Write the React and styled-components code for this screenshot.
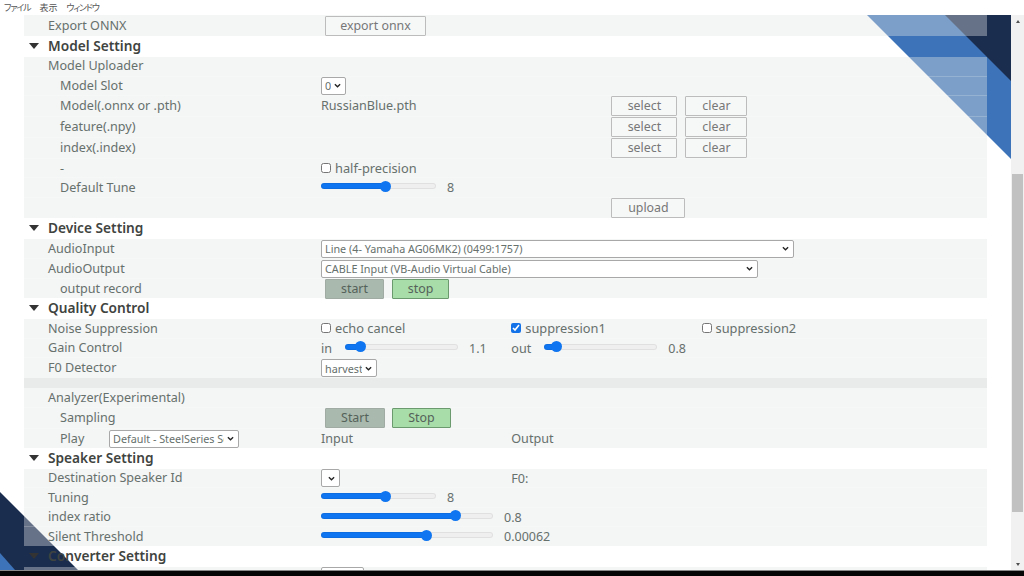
import styled, { createGlobalStyle } from 'styled-components'

const GlobalStyle = createGlobalStyle`
    html, body {
        margin: 0;
        padding: 0;
        background: #fff;
        overflow: hidden;
    }
    body {
        font-family: "Noto Sans", "Open Sans", sans-serif;
    }
`

const chevron = `url("data:image/svg+xml,%3Csvg xmlns='http://www.w3.org/2000/svg' viewBox='0 0 8 5'%3E%3Cpath d='M1 1l3 3 3-3' fill='none' stroke='%23222' stroke-width='1.5'/%3E%3C/svg%3E")`

const App = () => {
    return (
        <Screen>
            <GlobalStyle />
            <MenuBar>
                <MenuItem $tight>ファイル</MenuItem>
                <MenuItem>表示</MenuItem>
                <MenuItem $tight>ウィンドウ</MenuItem>
            </MenuBar>
            <Body>
                <Page>
                    <CornerTop viewBox="0 0 144 144">
                        <polygon points="0,0 144,144 144,0" fill="#3d74b9" />
                        <polygon points="78,0 144,66 144,0" fill="#1b2d4f" />
                    </CornerTop>
                    <CornerBottom viewBox="0 0 78 78">
                        <polygon points="0,0 78,78 0,78" fill="#1b2d4f" />
                        <polygon points="0,61 15,78 0,78" fill="#3d74b9" />
                    </CornerBottom>

                    <Row $h={21} $flush>
                        <Label>Export ONNX</Label>
                        <Cell $span={2}><Button $ml={4} $w={101}>export onnx</Button></Cell>
                    </Row>

                    <Section>Model Setting</Section>
                    <Row><Label>Model Uploader</Label></Row>
                    <Row>
                        <Label $sub>Model Slot</Label>
                        <Cell>
                            <Select $w={25}><option>0</option></Select>
                        </Cell>
                    </Row>
                    <Row $h={21}>
                        <Label $sub>Model(.onnx or .pth)</Label>
                        <Cell $span={3} $text>RussianBlue.pth</Cell>
                        <Cell $span={4}><Button $ml={5} $w={66}>select</Button><Button $ml={8} $w={62}>clear</Button></Cell>
                    </Row>
                    <Row $h={21}>
                        <Label $sub>feature(.npy)</Label>
                        <Cell $span={3} />
                        <Cell $span={4}><Button $ml={5} $w={66}>select</Button><Button $ml={8} $w={62}>clear</Button></Cell>
                    </Row>
                    <Row $h={21}>
                        <Label $sub>index(.index)</Label>
                        <Cell $span={3} />
                        <Cell $span={4}><Button $ml={5} $w={66}>select</Button><Button $ml={8} $w={62}>clear</Button></Cell>
                    </Row>
                    <Row $h={19}>
                        <Label $sub>-</Label>
                        <Cell $span={3} $text><Check /><CheckText>half-precision</CheckText></Cell>
                    </Row>
                    <Row $h={20}>
                        <Label $sub>Default Tune</Label>
                        <Cell $span={3}><Slider $w={115} $value={57} /><Value>8</Value></Cell>
                    </Row>
                    <Row $h={20} $flush>
                        <Label />
                        <Cell $span={3} />
                        <Cell $span={2}><Button $ml={5} $w={74}>upload</Button></Cell>
                    </Row>

                    <Section>Device Setting</Section>
                    <Row $h={20}>
                        <Label>AudioInput</Label>
                        <Cell $span={7}>
                            <Select $w={473}><option>Line (4- Yamaha AG06MK2) (0499:1757)</option></Select>
                        </Cell>
                    </Row>
                    <Row $h={20}>
                        <Label>AudioOutput</Label>
                        <Cell $span={7}>
                            <Select $w={437}><option>CABLE Input (VB-Audio Virtual Cable)</option></Select>
                        </Cell>
                    </Row>
                    <Row $h={19} $flush>
                        <Label $sub>output record</Label>
                        <Cell $span={3}>
                            <Button $ml={4} $w={59} $kind="idle">start</Button>
                            <Button $ml={8} $w={57} $kind="active">stop</Button>
                        </Cell>
                    </Row>

                    <Section>Quality Control</Section>
                    <Row $h={20}>
                        <Label>Noise Suppression</Label>
                        <Cell $span={2} $text><Check /><CheckText>echo cancel</CheckText></Cell>
                        <Cell $span={2} $text><Check defaultChecked /><CheckText>suppression1</CheckText></Cell>
                        <Cell $span={2} $text><Check /><CheckText>suppression2</CheckText></Cell>
                    </Row>
                    <Row $h={19}>
                        <Label>Gain Control</Label>
                        <Cell $span={2}>
                            <SliderName>in</SliderName><Slider $w={113} $value={10} /><Value>1.1</Value>
                        </Cell>
                        <Cell $span={2}>
                            <SliderName>out</SliderName><Slider $w={113} $value={7} $ml={9} /><Value>0.8</Value>
                        </Cell>
                    </Row>
                    <Row $h={20} $flush>
                        <Label>F0 Detector</Label>
                        <Cell $span={2}>
                            <Select $w={56}><option>harvest</option></Select>
                        </Cell>
                    </Row>

                    <Divider />

                    <Row $h={20}><Label>Analyzer(Experimental)</Label></Row>
                    <Row $h={21}>
                        <Label $sub>Sampling</Label>
                        <Cell $span={3}>
                            <Button $ml={4} $w={60} $kind="idle">Start</Button>
                            <Button $ml={7} $w={59} $kind="active">Stop</Button>
                        </Cell>
                    </Row>
                    <Row $h={19} $flush>
                        <Label $sub $flat>
                            <PlayName>Play</PlayName>
                            <Select $w={130}><option>Default - SteelSeries Sonar - Media</option></Select>
                        </Label>
                        <Cell $span={2}>Input</Cell>
                        <Cell $span={2}>Output</Cell>
                    </Row>

                    <Section>Speaker Setting</Section>
                    <Row $h={19}>
                        <Label>Destination Speaker Id</Label>
                        <Cell $span={2}><Select $w={18} /></Cell>
                        <Cell $span={2}>F0:</Cell>
                    </Row>
                    <Row $h={20}>
                        <Label>Tuning</Label>
                        <Cell $span={3}><Slider $w={115} $value={57} /><Value>8</Value></Cell>
                    </Row>
                    <Row $h={19}>
                        <Label>index ratio</Label>
                        <Cell $span={4}><Slider $w={172} $value={80} /><Value>0.8</Value></Cell>
                    </Row>
                    <Row $h={19} $flush>
                        <Label>Silent Threshold</Label>
                        <Cell $span={4}><Slider $w={172} $value={62} /><Value>0.00062</Value></Cell>
                    </Row>

                    <Section>Converter Setting</Section>
                    <Row>
                        <Label>Input Chunk Num(128sample/chunk)</Label>
                        <Cell><Select $w={43}><option>64</option></Select></Cell>
                    </Row>
                </Page>
                <ScrollBar>
                    <ScrollArrow />
                    <ScrollTrack><ScrollThumb /></ScrollTrack>
                    <ScrollArrow $down />
                </ScrollBar>
            </Body>
            <TaskEdge />
        </Screen>
    )
}

export default App

const Screen = styled.div`
    width: 1024px;
    height: 576px;
    display: flex;
    flex-direction: column;
    overflow: hidden;
    color: #66706c;
    font-size: 12.6px;
`

const MenuBar = styled.div`
    height: 15px;
    flex: none;
    display: flex;
    align-items: center;
    gap: 9px;
    padding-left: 4px;
    background: #fff;
`

const MenuItem = styled.span`
    font-family: "Noto Sans CJK JP", sans-serif;
    font-size: 9px;
    font-feature-settings: "palt";
    letter-spacing: ${(p) => (p.$tight ? '-1.2px' : '0')};
    color: #555;
`

const Body = styled.div`
    flex: 1;
    min-height: 0;
    display: flex;
`

const Page = styled.div`
    flex: 1;
    min-width: 0;
    position: relative;
    isolation: isolate;
    overflow: hidden;
    background: #fff;
    display: flex;
    flex-direction: column;
    padding: 0 24px;
`

const CornerTop = styled.svg`
    position: absolute;
    top: 0;
    right: 0;
    width: 144px;
    height: 144px;
    z-index: -1;
`

const CornerBottom = styled.svg`
    position: absolute;
    bottom: 0;
    left: 0;
    width: 78px;
    height: 78px;
    z-index: -1;
`

const Row = styled.div`
    flex: none;
    box-sizing: border-box;
    height: ${(p) => p.$h || 19.5}px;
    border-bottom: ${(p) => (p.$flush ? 'none' : '1px solid rgba(255, 255, 255, 0.2)')};
    display: grid;
    grid-template-columns: 297px repeat(7, 1fr);
    align-items: center;
    background: rgba(226, 228, 228, 0.38);
    white-space: nowrap;
`

const Label = styled.div`
    display: flex;
    align-items: center;
    padding-left: ${(p) => (p.$sub ? 36 : 24)}px;
    padding-bottom: ${(p) => (p.$flat ? 0 : 1)}px;
`

const Cell = styled.div`
    grid-column: span ${(p) => p.$span || 1};
    display: flex;
    align-items: center;
    min-width: 0;
    padding-bottom: ${(p) => (p.$text ? 2 : 0)}px;
`

const Section = styled.div`
    flex: none;
    box-sizing: border-box;
    height: 21px;
    display: flex;
    align-items: center;
    padding: 0 0 2px 24px;
    position: relative;
    font-size: 13.7px;
    font-weight: 600;
    color: #3f4441;

    &::before {
        content: "";
        position: absolute;
        left: 5px;
        top: 7px;
        border-left: 5px solid transparent;
        border-right: 5px solid transparent;
        border-top: 6px solid #333;
    }
`

const Divider = styled.div`
    flex: none;
    height: 10px;
    background: #e9ebea;
`

const Button = styled.button`
    box-sizing: border-box;
    height: 20px;
    width: ${(p) => p.$w}px;
    margin-left: ${(p) => p.$ml || 0}px;
    padding: 0 0 1px;
    font-family: inherit;
    font-size: 12.4px;
    color: ${(p) => (p.$kind ? '#55625a' : '#777')};
    background: ${(p) => (p.$kind === 'idle' ? '#a9b9ad' : p.$kind === 'active' ? '#a8dca8' : '#f6f7f7')};
    border: 1px solid ${(p) => (p.$kind === 'idle' ? '#a0aca3' : p.$kind === 'active' ? '#6a9a6e' : '#bcbcbc')};
    border-radius: 1px;
`

const Select = styled.select`
    appearance: none;
    -webkit-appearance: none;
    box-sizing: border-box;
    flex: none;
    height: 18px;
    width: ${(p) => p.$w}px;
    padding: 0 14px 0 3px;
    font-family: inherit;
    font-size: 10.8px;
    color: #66706c;
    background: #fff ${chevron} no-repeat right 4px center / 7px 5px;
    border: 1px solid #a8a8a8;
    border-radius: 2px;
`

const Check = styled.input.attrs({ type: 'checkbox' })`
    width: 10px;
    height: 10px;
    margin: 0 4px 0 0;
    accent-color: #1472e8;
`

const CheckText = styled.span`
    font-size: 12.8px;
`

const Slider = styled.input.attrs((p) => ({ type: 'range', min: 0, max: 100, defaultValue: p.$value }))`
    appearance: none;
    -webkit-appearance: none;
    flex: none;
    width: ${(p) => p.$w}px;
    height: 6px;
    margin: 0 0 3px ${(p) => p.$ml || 0}px;
    border-radius: 3px;
    background: linear-gradient(to right, #0f75f0 ${(p) => p.$value}%, #efefef ${(p) => p.$value}%);
    box-shadow: inset 0 0 0 1px rgba(0, 0, 0, 0.06);

    &::-webkit-slider-thumb {
        -webkit-appearance: none;
        width: 11px;
        height: 11px;
        border-radius: 50%;
        background: #0f75f0;
    }
`

const SliderName = styled.span`
    width: 24px;
    flex: none;
`

const Value = styled.span`
    margin-left: 11px;
    font-size: 12.5px;
`

const PlayName = styled.span`
    width: 49px;
    flex: none;
`

const ScrollBar = styled.div`
    flex: none;
    width: 13px;
    display: flex;
    flex-direction: column;
    background: #f1f1f1;
`

const ScrollArrow = styled.div`
    flex: none;
    height: 12px;
    display: flex;
    align-items: center;
    justify-content: center;

    &::after {
        content: "";
        border-left: 2.5px solid transparent;
        border-right: 2.5px solid transparent;
        ${(p) => (p.$down ? 'border-top: 3px solid #505050;' : 'border-bottom: 3px solid #505050;')}
    }
`

const ScrollTrack = styled.div`
    flex: 1;
    padding: 147px 1px 0;
`

const ScrollThumb = styled.div`
    height: 338px;
    background: #c1c1c1;
`

const TaskEdge = styled.div`
    flex: none;
    box-sizing: border-box;
    height: 6px;
    background: #050505;
    border-top: 1px solid #8a8a8a;
`
